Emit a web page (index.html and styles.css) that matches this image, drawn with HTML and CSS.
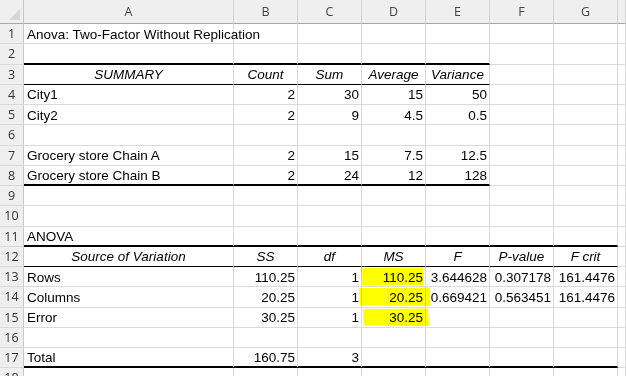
FILE: index.html
```html
<!DOCTYPE html>
<html>
<head>
<meta charset="utf-8">
<link rel="stylesheet" href="styles.css">
</head>
<body>
<div class="sheet">
  <div class="grid">
    <div class="corner"><svg width="24" height="24" viewBox="0 0 24 24"><polygon points="20,9 20,20 9,20" fill="#d6d6d6"/></svg></div>
    <div class="ch">A</div><div class="ch">B</div><div class="ch">C</div><div class="ch">D</div><div class="ch">E</div><div class="ch">F</div><div class="ch">G</div><div class="ch"></div>

    <div class="rh">1</div><div class="c">Anova: Two-Factor Without Replication</div><div class="c"></div><div class="c"></div><div class="c"></div><div class="c"></div><div class="c"></div><div class="c"></div><div class="c"></div>

    <div class="rh">2</div><div class="c tb"></div><div class="c tb"></div><div class="c tb"></div><div class="c tb"></div><div class="c tb"></div><div class="c"></div><div class="c"></div><div class="c"></div>

    <div class="rh">3</div><div class="c hd thin">SUMMARY</div><div class="c hd thin">Count</div><div class="c hd thin">Sum</div><div class="c hd thin">Average</div><div class="c hd thin">Variance</div><div class="c"></div><div class="c"></div><div class="c"></div>

    <div class="rh">4</div><div class="c">City1</div><div class="c r">2</div><div class="c r">30</div><div class="c r">15</div><div class="c r">50</div><div class="c"></div><div class="c"></div><div class="c"></div>

    <div class="rh">5</div><div class="c">City2</div><div class="c r">2</div><div class="c r">9</div><div class="c r">4.5</div><div class="c r">0.5</div><div class="c"></div><div class="c"></div><div class="c"></div>

    <div class="rh">6</div><div class="c"></div><div class="c"></div><div class="c"></div><div class="c"></div><div class="c"></div><div class="c"></div><div class="c"></div><div class="c"></div>

    <div class="rh">7</div><div class="c">Grocery store Chain A</div><div class="c r">2</div><div class="c r">15</div><div class="c r">7.5</div><div class="c r">12.5</div><div class="c"></div><div class="c"></div><div class="c"></div>

    <div class="rh">8</div><div class="c tb">Grocery store Chain B</div><div class="c r tb">2</div><div class="c r tb">24</div><div class="c r tb">12</div><div class="c r tb">128</div><div class="c"></div><div class="c"></div><div class="c"></div>

    <div class="rh">9</div><div class="c"></div><div class="c"></div><div class="c"></div><div class="c"></div><div class="c"></div><div class="c"></div><div class="c"></div><div class="c"></div>

    <div class="rh">10</div><div class="c"></div><div class="c"></div><div class="c"></div><div class="c"></div><div class="c"></div><div class="c"></div><div class="c"></div><div class="c"></div>

    <div class="rh">11</div><div class="c tb">ANOVA</div><div class="c tb"></div><div class="c tb"></div><div class="c tb"></div><div class="c tb"></div><div class="c tb"></div><div class="c tb"></div><div class="c"></div>

    <div class="rh">12</div><div class="c hd thin">Source of Variation</div><div class="c hd thin">SS</div><div class="c hd thin">df</div><div class="c hd thin">MS</div><div class="c hd thin">F</div><div class="c hd thin">P-value</div><div class="c hd thin">F crit</div><div class="c"></div>

    <div class="rh">13</div><div class="c">Rows</div><div class="c r">110.25</div><div class="c r">1</div><div class="c r">110.25</div><div class="c r">3.644628</div><div class="c r">0.307178</div><div class="c r">161.4476</div><div class="c"></div>

    <div class="rh">14</div><div class="c">Columns</div><div class="c r">20.25</div><div class="c r">1</div><div class="c r">20.25</div><div class="c r">0.669421</div><div class="c r">0.563451</div><div class="c r">161.4476</div><div class="c"></div>

    <div class="rh">15</div><div class="c">Error</div><div class="c r">30.25</div><div class="c r">1</div><div class="c r">30.25</div><div class="c"></div><div class="c"></div><div class="c"></div><div class="c"></div>

    <div class="rh">16</div><div class="c"></div><div class="c"></div><div class="c"></div><div class="c"></div><div class="c"></div><div class="c"></div><div class="c"></div><div class="c"></div>

    <div class="rh">17</div><div class="c tb">Total</div><div class="c r tb">160.75</div><div class="c r tb">3</div><div class="c tb"></div><div class="c tb"></div><div class="c tb"></div><div class="c tb"></div><div class="c"></div>

    <div class="rh">18</div><div class="c"></div><div class="c"></div><div class="c"></div><div class="c"></div><div class="c"></div><div class="c"></div><div class="c"></div><div class="c"></div>
  </div>
  <svg class="marks" width="626" height="376" viewBox="0 0 626 376">
    <polygon points="361,268 423,267.5 423.5,285 362,285.5" fill="#ffff00"/>
    <polygon points="359,288 430,287.5 430.5,306 360,305.5" fill="#ffff00"/>
    <polygon points="363,309 428,308.5 429,326 363.5,325.5" fill="#ffff00"/>
  </svg>
</div>
</body>
</html>
```
FILE: styles.css
```css
html, body {
  margin: 0;
  padding: 0;
  background: #ffffff;
}
.sheet {
  position: relative;
  width: 626px;
  height: 376px;
  overflow: hidden;
}
.grid {
  display: grid;
  grid-template-columns: 24px 210px repeat(6, 64px) 8px;
  grid-template-rows: 24px repeat(18, 20.25px);
  font-family: "Liberation Sans", Arial, sans-serif;
  font-size: 13.5px;
  color: #000;
}
.corner {
  background: #efefef;
  border-right: 1px solid #c8c8c8;
  border-bottom: 1px solid #a8a8a8;
  box-sizing: border-box;
}
.corner svg { display: block; }
.ch {
  background: #efefef;
  border-right: 1px solid #d4d4d4;
  border-bottom: 1px solid #a8a8a8;
  box-sizing: border-box;
  display: flex;
  align-items: center;
  justify-content: center;
  font-family: "Open Sans", "Noto Sans", sans-serif;
  font-size: 12.5px;
  color: #444;
}
.rh {
  background: #efefef;
  border-right: 1px solid #c8c8c8;
  border-bottom: 1px solid #d9d9d9;
  box-sizing: border-box;
  display: flex;
  align-items: center;
  justify-content: center;
  font-family: "Open Sans", "Noto Sans", sans-serif;
  font-size: 12.5px;
  color: #333;
}
.c {
  border-right: 1px solid #dadada;
  border-bottom: 1px solid #dadada;
  box-sizing: border-box;
  display: flex;
  align-items: center;
  padding: 1px 3px 0 3px;
  white-space: nowrap;
  overflow: visible;
}
.r { justify-content: flex-end; padding-right: 2px; }
.hd { justify-content: center; font-style: italic; }
.tb { border-bottom: 2px solid #000; }
.thin { border-bottom: 1px solid #000; }
.marks {
  position: absolute;
  left: 0;
  top: 0;
  pointer-events: none;
  mix-blend-mode: multiply;
}
```
